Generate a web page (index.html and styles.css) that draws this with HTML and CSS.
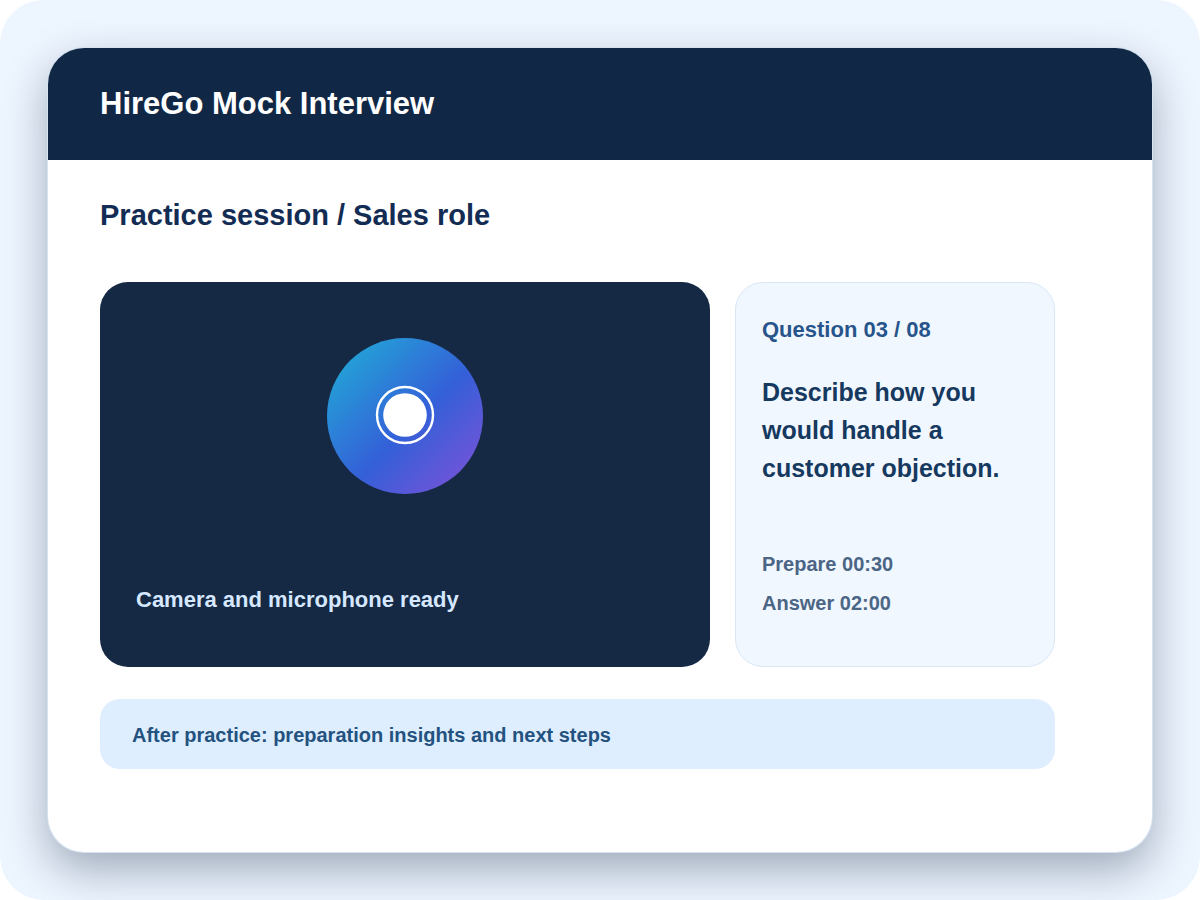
FILE: index.html
```
<!DOCTYPE html>
<html lang="en">

<head>
    <meta charset="UTF-8">
    <meta name="viewport" content="width=device-width, initial-scale=1.0">
    <title>HireGo Mock Interview</title>
    <link rel="stylesheet" href="styles.css">
</head>

<body>
    <div class="page">
        <main class="window">
            <header class="window-header">
                <h1>HireGo Mock Interview</h1>
            </header>

            <div class="content">
                <h2>Practice session / Sales role</h2>

                <div class="session">
                    <!-- Camera preview -->
                    <section class="camera">
                        <svg class="record-icon" viewBox="0 0 156 156" aria-hidden="true">
                            <defs>
                                <linearGradient id="record-fill" x1="0" y1="0" x2="1" y2="1">
                                    <stop offset="0" stop-color="#20b2d6" />
                                    <stop offset="0.55" stop-color="#3460d8" />
                                    <stop offset="1" stop-color="#8450d8" />
                                </linearGradient>
                            </defs>
                            <circle cx="78" cy="78" r="78" fill="url(#record-fill)" />
                            <circle cx="78" cy="77" r="28" fill="none" stroke="#ffffff" stroke-width="2.4" />
                            <circle cx="78" cy="77" r="21.8" fill="#ffffff" />
                        </svg>
                        <p>Camera and microphone ready</p>
                    </section>

                    <!-- Current question -->
                    <section class="question">
                        <h3>Question 03 / 08</h3>
                        <p class="prompt">Describe how you would handle a customer objection.</p>
                        <ul class="timers">
                            <li>Prepare 00:30</li>
                            <li>Answer 02:00</li>
                        </ul>
                    </section>
                </div>

                <p class="after">After practice: preparation insights and next steps</p>
            </div>
        </main>
    </div>
</body>

</html>
```
FILE: styles.css
```
* {
    box-sizing: border-box;
}

body {
    margin: 0;
    background: #ffffff;
    font-family: "Liberation Sans", Arial, sans-serif;
    font-weight: bold;
}

h1,
h2,
h3,
p,
ul {
    margin: 0;
    padding: 0;
}

.page {
    display: flex;
    min-height: 100vh;
    padding: 48px;
    background: #edf5ff;
    border-radius: 44px;
    overflow: hidden;
}

.window {
    flex: 1;
    background: #ffffff;
    border-radius: 36px;
    box-shadow: 0 0 0 1px #d5e2f0, 0 18px 44px rgba(16, 32, 56, 0.35);
}

.window-header {
    padding: 36px 52px;
    background: #102846;
    border-radius: 36px 36px 0 0;
    color: #ffffff;
}

.window-header h1 {
    font-size: 31px;
    line-height: 40px;
}

.content {
    padding: 36px 97px 48px 52px;
}

.content h2 {
    margin-bottom: 48px;
    color: #132c54;
    font-size: 29px;
    line-height: 38px;
}

.session {
    display: grid;
    grid-template-columns: 1fr 320px;
    gap: 25px;
    margin-bottom: 32px;
}

.camera {
    display: flex;
    flex-direction: column;
    justify-content: space-between;
    padding: 56px 36px 53px;
    background: #152844;
    border-radius: 28px;
    color: #d5e8ff;
    font-size: 22px;
    line-height: 28px;
}

.record-icon {
    width: 156px;
    height: 156px;
    align-self: center;
}

.question {
    padding: 32px 26px 43px;
    background: #f1f7ff;
    border: 1px solid #d9e7f4;
    border-radius: 28px;
}

.question h3 {
    margin-bottom: 28px;
    color: #27548a;
    font-size: 22px;
    line-height: 30px;
}

.prompt {
    margin-bottom: 58px;
    color: #163960;
    font-size: 25px;
    line-height: 38px;
}

.timers {
    list-style: none;
    color: #4b6585;
    font-size: 20px;
    line-height: 39px;
}

.after {
    padding: 21px 32px 19px;
    background: #deeeff;
    border-radius: 20px;
    color: #24527f;
    font-size: 20px;
    line-height: 30px;
}

@media (max-width: 900px) {
    .page {
        padding: 20px;
    }

    .content {
        padding: 36px 24px;
    }

    .session {
        grid-template-columns: 1fr;
    }
}
```
